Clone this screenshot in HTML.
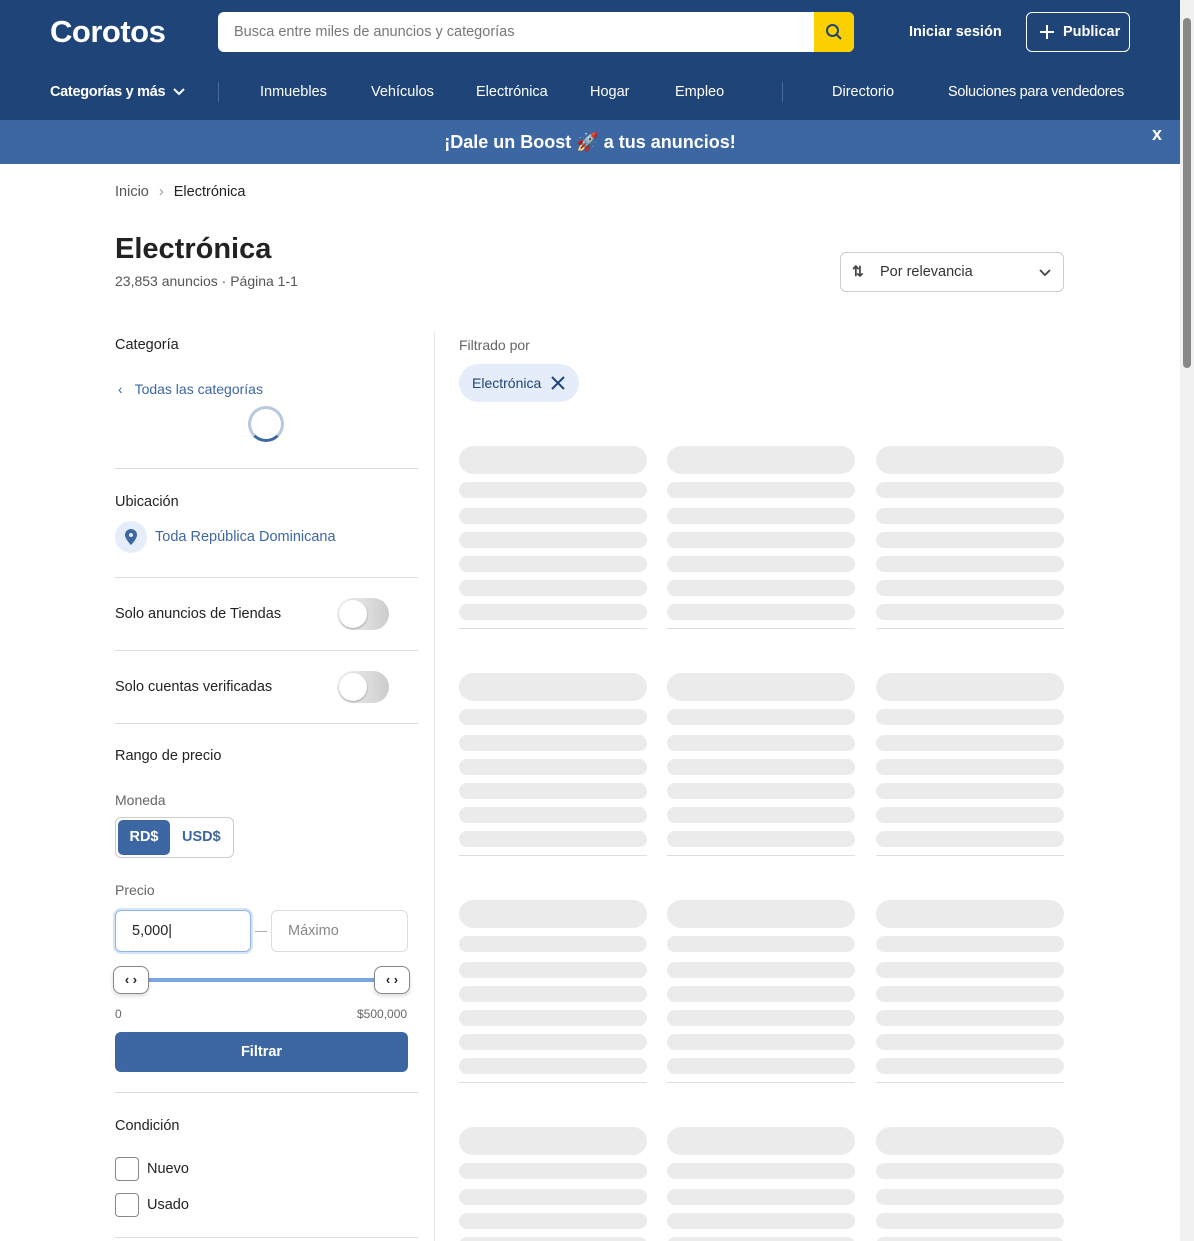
<!DOCTYPE html>
<html><head><meta charset="utf-8">
<style>
*{box-sizing:border-box;margin:0;padding:0}
html,body{width:1194px;height:1241px;overflow:hidden;background:#fff;font-family:"Liberation Sans",sans-serif;color:#222}
#w{position:relative;width:1194px;height:1241px;overflow:hidden}
.a{position:absolute}
.hdr{left:0;top:0;width:1180px;height:120px;background:#1f4478}
.nav{color:#fff;font-size:14.5px;top:84px}
.ban{left:0;top:120px;width:1180px;height:44px;background:#3d67a3;color:#fff;font-weight:bold;font-size:18px;text-align:center;line-height:44px}
.sb{left:1180px;top:0;width:14px;height:1241px;background:#f1f1f1}
.hr{height:1px;background:#ddd;left:115px;width:303px}
.lbl{font-size:14.5px;color:#222;left:115px}
.tog{width:52px;height:32px;border-radius:16px;background:linear-gradient(90deg,#f4f4f4,#ccc);left:337px}
.tog::after{content:"";position:absolute;left:2px;top:2px;width:28px;height:28px;border-radius:50%;background:#fff;box-shadow:0 1px 2px rgba(0,0,0,.3)}
.sk{background:#ebebeb;border-radius:8px;width:188px;height:16px}
.skt{height:28px;border-radius:14px}
.skl{height:1px;background:#ddd;width:188px}
.chk{width:24px;height:24px;border:1px solid #888;border-radius:4px;left:115px}
.th{width:36px;height:28px;border:1px solid #888;border-radius:8px;background:#fff;font-size:13px;font-weight:bold;text-align:center;line-height:25px;box-shadow:0 2px 4px rgba(0,0,0,.15)}
</style></head><body><div id="w">
<div class="a hdr"></div>
<div class="a" style="left:50px;top:14px;color:#fff;font-size:31px;font-weight:bold;letter-spacing:-0.5px">Corotos</div>
<div class="a" style="left:218px;top:12px;width:636px;height:40px;background:#fff;border-radius:6px;overflow:hidden">
 <div class="a" style="left:16px;top:12px;font-size:14.5px;color:#777">Busca entre miles de anuncios y categorías</div>
 <div class="a" style="left:596px;top:0;width:40px;height:40px;background:#fccf00">
  <svg class="a" style="left:11px;top:11px" width="18" height="18" viewBox="0 0 18 18"><circle cx="7.5" cy="7.5" r="5.5" fill="none" stroke="#1f4478" stroke-width="2"/><path d="M11.5 11.5L16 16" stroke="#1f4478" stroke-width="2"/></svg>
 </div>
</div>
<div class="a" style="left:909px;top:24px;color:#fff;font-weight:bold;font-size:14.5px">Iniciar sesión</div>
<div class="a" style="left:1026px;top:12px;width:104px;height:40px;border:1px solid #fff;border-radius:6px;color:#fff;font-weight:bold;font-size:14.5px;line-height:38px;padding-left:36px">Publicar</div>
<svg class="a" style="left:1039px;top:24px" width="16" height="16"><path d="M8 1v14M1 8h14" stroke="#fff" stroke-width="2"/></svg>
<div class="a nav" style="left:50px;font-weight:bold;letter-spacing:-0.3px">Categorías y más</div>
<svg class="a" style="left:172px;top:86px" width="14" height="12"><path d="M2 3l5 5 5-5" stroke="#fff" stroke-width="2" fill="none"/></svg>
<div class="a" style="left:218px;top:82px;width:1px;height:20px;background:#4a6b9a"></div>
<div class="a nav" style="left:260px">Inmuebles</div>
<div class="a nav" style="left:371px">Vehículos</div>
<div class="a nav" style="left:476px">Electrónica</div>
<div class="a nav" style="left:590px">Hogar</div>
<div class="a nav" style="left:675px">Empleo</div>
<div class="a" style="left:782px;top:82px;width:1px;height:20px;background:#4a6b9a"></div>
<div class="a nav" style="left:832px">Directorio</div>
<div class="a nav" style="left:948px;letter-spacing:-0.3px">Soluciones para vendedores</div>
<div class="a ban">¡Dale un Boost 🚀 a tus anuncios!</div>
<div class="a" style="left:1152px;top:124px;color:#fff;font-weight:bold;font-size:18px">x</div>
<div class="a sb"><div class="a" style="left:3px;top:18px;width:8px;height:350px;background:#888;border-radius:4px"></div></div>

<div class="a" style="left:115px;top:184px;font-size:14.5px;color:#555">Inicio <span style="color:#999;margin:0 6px">›</span> <span style="color:#222">Electrónica</span></div>
<div class="a" style="left:115px;top:233px;font-size:29px;font-weight:bold;color:#222">Electrónica</div>
<div class="a" style="left:115px;top:273px;font-size:14px;color:#555">23,853 anuncios · Página 1-1</div>
<div class="a" style="left:840px;top:252px;width:224px;height:40px;border:1px solid #ccc;border-radius:6px">
 <div class="a" style="left:11px;top:10px;font-size:14px;color:#444;font-weight:bold">⇅</div>
 <div class="a" style="left:39px;top:11px;font-size:14.5px;color:#333">Por relevancia</div>
 <svg class="a" style="left:197px;top:14px" width="14" height="12"><path d="M2 3l5 5 5-5" stroke="#444" stroke-width="1.8" fill="none"/></svg>
</div>

<div class="a" style="left:434px;top:332px;width:1px;height:909px;background:#e5e5e5"></div>

<div class="a lbl" style="top:337px">Categoría</div>
<div class="a" style="left:118px;top:381px;font-size:14px;color:#3d67a3">‹ <span style="margin-left:8px">Todas las categorías</span></div>
<div class="a" style="left:248px;top:406px;width:36px;height:36px;border-radius:50%;border:3px solid #b8c8dd;border-bottom-color:#3d67a3"></div>
<div class="a hr" style="top:468px"></div>
<div class="a lbl" style="top:494px">Ubicación</div>
<div class="a" style="left:115px;top:521px;width:32px;height:32px;border-radius:50%;background:#e4edf9"></div>
<svg class="a" style="left:124px;top:528px" width="14" height="18" viewBox="0 0 14 18"><path d="M7 1a6 6 0 0 0-6 6c0 4 6 10 6 10s6-6 6-10a6 6 0 0 0-6-6z" fill="#3d67a3"/><circle cx="7" cy="7" r="2" fill="#e4edf9"/></svg>
<div class="a" style="left:155px;top:529px;font-size:14.5px;color:#3d67a3">Toda República Dominicana</div>
<div class="a hr" style="top:577px"></div>
<div class="a lbl" style="top:606px">Solo anuncios de Tiendas</div>
<div class="a tog" style="top:598px"></div>
<div class="a hr" style="top:650px"></div>
<div class="a lbl" style="top:679px">Solo cuentas verificadas</div>
<div class="a tog" style="top:671px"></div>
<div class="a hr" style="top:723px"></div>
<div class="a lbl" style="top:748px">Rango de precio</div>
<div class="a lbl" style="top:792px;color:#666;font-size:14px">Moneda</div>
<div class="a" style="left:115px;top:817px;width:119px;height:41px;border:1px solid #ccc;border-radius:6px">
 <div class="a" style="left:2px;top:2px;width:52px;height:35px;background:#3d67a3;border-radius:5px;color:#fff;font-weight:bold;font-size:14.5px;text-align:center;line-height:35px">RD$</div>
 <div class="a" style="left:66px;top:11px;color:#3d67a3;font-weight:bold;font-size:14.5px">USD$</div>
</div>
<div class="a lbl" style="top:882px;color:#666;font-size:14px">Precio</div>
<div class="a" style="left:115px;top:910px;width:136px;height:42px;border:1px solid #8fb3e8;box-shadow:0 0 0 2px #d6e4f8;border-radius:6px;font-size:14.5px;padding:12px 16px">5,000|</div>
<div class="a" style="left:255px;top:931px;width:12px;height:1px;background:#aaa"></div>
<div class="a" style="left:271px;top:910px;width:137px;height:42px;border:1px solid #ddd;border-radius:6px;font-size:14.5px;color:#888;padding:12px 16px">Máximo</div>
<div class="a" style="left:140px;top:978px;width:245px;height:4px;background:#7aa7e0"></div>
<div class="a th" style="left:113px;top:966px">‹ ›</div>
<div class="a th" style="left:374px;top:966px">‹ ›</div>
<div class="a" style="left:115px;top:1007px;font-size:12px;color:#666">0</div>
<div class="a" style="left:357px;top:1007px;font-size:12px;color:#666">$500,000</div>
<div class="a" style="left:115px;top:1032px;width:293px;height:40px;background:#3d67a3;border-radius:6px;color:#fff;font-weight:bold;font-size:14.5px;text-align:center;line-height:40px">Filtrar</div>
<div class="a hr" style="top:1092px"></div>
<div class="a lbl" style="top:1118px">Condición</div>
<div class="a chk" style="top:1157px"></div>
<div class="a" style="left:147px;top:1161px;font-size:14.5px">Nuevo</div>
<div class="a chk" style="top:1193px"></div>
<div class="a" style="left:147px;top:1197px;font-size:14.5px">Usado</div>
<div class="a hr" style="top:1237px"></div>

<div class="a" style="left:459px;top:337px;font-size:14px;color:#666">Filtrado por</div>
<div class="a" style="left:459px;top:364px;width:120px;height:38px;border-radius:19px;background:#e4edf9;font-size:14px;color:#1f4478;padding:11px 0 0 13px">Electrónica</div>
<svg class="a" style="left:551px;top:376px" width="14" height="14"><path d="M1 1l12 12M13 1L1 13" stroke="#1f4478" stroke-width="2"/></svg>

<div id="g"></div>
</div>
<script>
var h='';[446,673,900,1127].forEach(function(y){[459,667,876].forEach(function(x){
h+='<div class="a sk skt" style="left:'+x+'px;top:'+y+'px"></div>';
[36,62,86,110,134,158].forEach(function(d){h+='<div class="a sk" style="left:'+x+'px;top:'+(y+d)+'px"></div>';});
h+='<div class="a skl" style="left:'+x+'px;top:'+(y+182)+'px"></div>';});});
document.getElementById('g').innerHTML=h;
</script>
</body></html>
